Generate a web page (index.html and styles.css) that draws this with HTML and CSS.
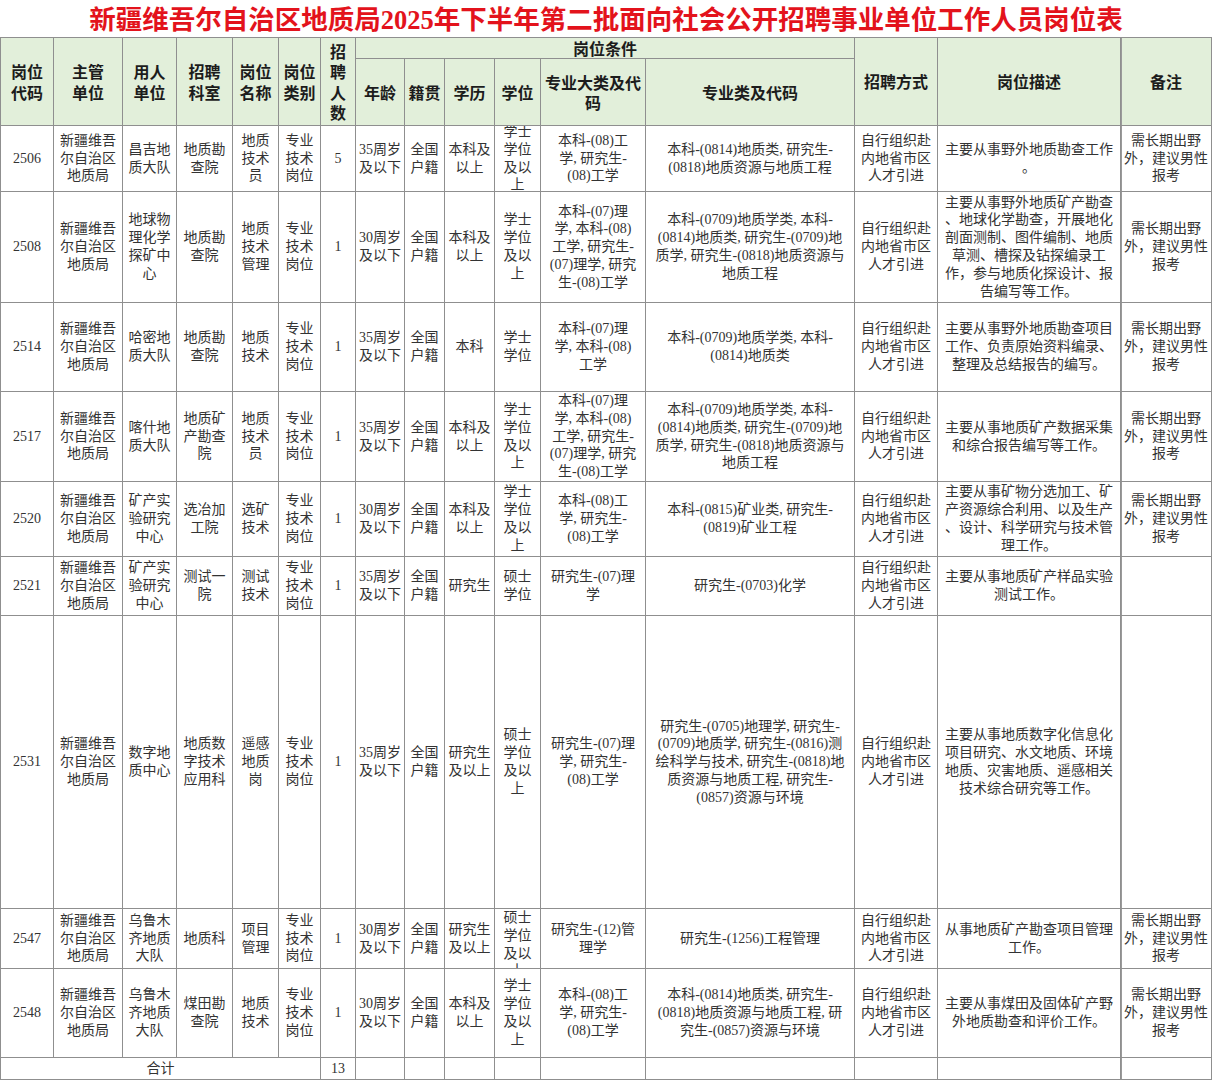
FILE: index.html
```html
<!DOCTYPE html>
<html lang="zh-CN">
<head>
<meta charset="utf-8">
<title>岗位表</title>
<link rel="stylesheet" href="styles.css">
</head>
<body>
<h1 class="title">新疆维吾尔自治区地质局2025年下半年第二批面向社会公开招聘事业单位工作人员岗位表</h1>
<div class="sheet">
  <div class="h r2"><span>岗位<br>代码</span></div>
  <div class="h r2"><span>主管<br>单位</span></div>
  <div class="h r2"><span>用人<br>单位</span></div>
  <div class="h r2"><span>招聘<br>科室</span></div>
  <div class="h r2"><span>岗位<br>名称</span></div>
  <div class="h r2"><span>岗位<br>类别</span></div>
  <div class="h r2"><span>招<br>聘<br>人<br>数</span></div>
  <div class="h w6 cond"><span>岗位条件</span></div>
  <div class="h r2"><span>招聘方式</span></div>
  <div class="h r2"><span>岗位描述</span></div>
  <div class="h r2 bz"><span>备注</span></div>
  <div class="h"><span>年龄</span></div>
  <div class="h"><span>籍贯</span></div>
  <div class="h"><span>学历</span></div>
  <div class="h"><span>学位</span></div>
  <div class="h"><span>专业大类及代<br>码</span></div>
  <div class="h"><span>专业类及代码</span></div>

  <div class="c"><span>2506</span></div>
  <div class="c"><span>新疆维吾<br>尔自治区<br>地质局</span></div>
  <div class="c"><span>昌吉地<br>质大队</span></div>
  <div class="c"><span>地质勘<br>查院</span></div>
  <div class="c"><span>地质<br>技术<br>员</span></div>
  <div class="c"><span>专业<br>技术<br>岗位</span></div>
  <div class="c"><span>5</span></div>
  <div class="c"><span>35周岁<br>及以下</span></div>
  <div class="c"><span>全国<br>户籍</span></div>
  <div class="c"><span>本科及<br>以上</span></div>
  <div class="c"><span>学士<br>学位<br>及以<br>上</span></div>
  <div class="c"><span>本科-(08)工<br>学, 研究生-<br>(08)工学</span></div>
  <div class="c"><span>本科-(0814)地质类, 研究生-<br>(0818)地质资源与地质工程</span></div>
  <div class="c"><span>自行组织赴<br>内地省市区<br>人才引进</span></div>
  <div class="c"><span>主要从事野外地质勘查工作<br>。</span></div>
  <div class="c bz"><span>需长期出野<br>外，建议男性<br>报考</span></div>

  <div class="c"><span>2508</span></div>
  <div class="c"><span>新疆维吾<br>尔自治区<br>地质局</span></div>
  <div class="c"><span>地球物<br>理化学<br>探矿中<br>心</span></div>
  <div class="c"><span>地质勘<br>查院</span></div>
  <div class="c"><span>地质<br>技术<br>管理</span></div>
  <div class="c"><span>专业<br>技术<br>岗位</span></div>
  <div class="c"><span>1</span></div>
  <div class="c"><span>30周岁<br>及以下</span></div>
  <div class="c"><span>全国<br>户籍</span></div>
  <div class="c"><span>本科及<br>以上</span></div>
  <div class="c"><span>学士<br>学位<br>及以<br>上</span></div>
  <div class="c"><span>本科-(07)理<br>学, 本科-(08)<br>工学, 研究生-<br>(07)理学, 研究<br>生-(08)工学</span></div>
  <div class="c"><span>本科-(0709)地质学类, 本科-<br>(0814)地质类, 研究生-(0709)地<br>质学, 研究生-(0818)地质资源与<br>地质工程</span></div>
  <div class="c"><span>自行组织赴<br>内地省市区<br>人才引进</span></div>
  <div class="c"><span>主要从事野外地质矿产勘查<br>、地球化学勘查，开展地化<br>剖面测制、图件编制、地质<br>草测、槽探及钻探编录工<br>作，参与地质化探设计、报<br>告编写等工作。</span></div>
  <div class="c bz"><span>需长期出野<br>外，建议男性<br>报考</span></div>

  <div class="c"><span>2514</span></div>
  <div class="c"><span>新疆维吾<br>尔自治区<br>地质局</span></div>
  <div class="c"><span>哈密地<br>质大队</span></div>
  <div class="c"><span>地质勘<br>查院</span></div>
  <div class="c"><span>地质<br>技术</span></div>
  <div class="c"><span>专业<br>技术<br>岗位</span></div>
  <div class="c"><span>1</span></div>
  <div class="c"><span>35周岁<br>及以下</span></div>
  <div class="c"><span>全国<br>户籍</span></div>
  <div class="c"><span>本科</span></div>
  <div class="c"><span>学士<br>学位</span></div>
  <div class="c"><span>本科-(07)理<br>学, 本科-(08)<br>工学</span></div>
  <div class="c"><span>本科-(0709)地质学类, 本科-<br>(0814)地质类</span></div>
  <div class="c"><span>自行组织赴<br>内地省市区<br>人才引进</span></div>
  <div class="c"><span>主要从事野外地质勘查项目<br>工作、负责原始资料编录、<br>整理及总结报告的编写。</span></div>
  <div class="c bz"><span>需长期出野<br>外，建议男性<br>报考</span></div>

  <div class="c"><span>2517</span></div>
  <div class="c"><span>新疆维吾<br>尔自治区<br>地质局</span></div>
  <div class="c"><span>喀什地<br>质大队</span></div>
  <div class="c"><span>地质矿<br>产勘查<br>院</span></div>
  <div class="c"><span>地质<br>技术<br>员</span></div>
  <div class="c"><span>专业<br>技术<br>岗位</span></div>
  <div class="c"><span>1</span></div>
  <div class="c"><span>35周岁<br>及以下</span></div>
  <div class="c"><span>全国<br>户籍</span></div>
  <div class="c"><span>本科及<br>以上</span></div>
  <div class="c"><span>学士<br>学位<br>及以<br>上</span></div>
  <div class="c"><span>本科-(07)理<br>学, 本科-(08)<br>工学, 研究生-<br>(07)理学, 研究<br>生-(08)工学</span></div>
  <div class="c"><span>本科-(0709)地质学类, 本科-<br>(0814)地质类, 研究生-(0709)地<br>质学, 研究生-(0818)地质资源与<br>地质工程</span></div>
  <div class="c"><span>自行组织赴<br>内地省市区<br>人才引进</span></div>
  <div class="c"><span>主要从事地质矿产数据采集<br>和综合报告编写等工作。</span></div>
  <div class="c bz"><span>需长期出野<br>外，建议男性<br>报考</span></div>

  <div class="c"><span>2520</span></div>
  <div class="c"><span>新疆维吾<br>尔自治区<br>地质局</span></div>
  <div class="c"><span>矿产实<br>验研究<br>中心</span></div>
  <div class="c"><span>选冶加<br>工院</span></div>
  <div class="c"><span>选矿<br>技术</span></div>
  <div class="c"><span>专业<br>技术<br>岗位</span></div>
  <div class="c"><span>1</span></div>
  <div class="c"><span>30周岁<br>及以下</span></div>
  <div class="c"><span>全国<br>户籍</span></div>
  <div class="c"><span>本科及<br>以上</span></div>
  <div class="c"><span>学士<br>学位<br>及以<br>上</span></div>
  <div class="c"><span>本科-(08)工<br>学, 研究生-<br>(08)工学</span></div>
  <div class="c"><span>本科-(0815)矿业类, 研究生-<br>(0819)矿业工程</span></div>
  <div class="c"><span>自行组织赴<br>内地省市区<br>人才引进</span></div>
  <div class="c"><span>主要从事矿物分选加工、矿<br>产资源综合利用、以及生产<br>、设计、科学研究与技术管<br>理工作。</span></div>
  <div class="c bz"><span>需长期出野<br>外，建议男性<br>报考</span></div>

  <div class="c"><span>2521</span></div>
  <div class="c"><span>新疆维吾<br>尔自治区<br>地质局</span></div>
  <div class="c"><span>矿产实<br>验研究<br>中心</span></div>
  <div class="c"><span>测试一<br>院</span></div>
  <div class="c"><span>测试<br>技术</span></div>
  <div class="c"><span>专业<br>技术<br>岗位</span></div>
  <div class="c"><span>1</span></div>
  <div class="c"><span>35周岁<br>及以下</span></div>
  <div class="c"><span>全国<br>户籍</span></div>
  <div class="c"><span>研究生</span></div>
  <div class="c"><span>硕士<br>学位</span></div>
  <div class="c"><span>研究生-(07)理<br>学</span></div>
  <div class="c"><span>研究生-(0703)化学</span></div>
  <div class="c"><span>自行组织赴<br>内地省市区<br>人才引进</span></div>
  <div class="c"><span>主要从事地质矿产样品实验<br>测试工作。</span></div>
  <div class="c bz"></div>

  <div class="c"><span>2531</span></div>
  <div class="c"><span>新疆维吾<br>尔自治区<br>地质局</span></div>
  <div class="c"><span>数字地<br>质中心</span></div>
  <div class="c"><span>地质数<br>字技术<br>应用科</span></div>
  <div class="c"><span>遥感<br>地质<br>岗</span></div>
  <div class="c"><span>专业<br>技术<br>岗位</span></div>
  <div class="c"><span>1</span></div>
  <div class="c"><span>35周岁<br>及以下</span></div>
  <div class="c"><span>全国<br>户籍</span></div>
  <div class="c"><span>研究生<br>及以上</span></div>
  <div class="c"><span>硕士<br>学位<br>及以<br>上</span></div>
  <div class="c"><span>研究生-(07)理<br>学, 研究生-<br>(08)工学</span></div>
  <div class="c"><span>研究生-(0705)地理学, 研究生-<br>(0709)地质学, 研究生-(0816)测<br>绘科学与技术, 研究生-(0818)地<br>质资源与地质工程, 研究生-<br>(0857)资源与环境</span></div>
  <div class="c"><span>自行组织赴<br>内地省市区<br>人才引进</span></div>
  <div class="c"><span>主要从事地质数字化信息化<br>项目研究、水文地质、环境<br>地质、灾害地质、遥感相关<br>技术综合研究等工作。</span></div>
  <div class="c bz"></div>

  <div class="c"><span>2547</span></div>
  <div class="c"><span>新疆维吾<br>尔自治区<br>地质局</span></div>
  <div class="c"><span>乌鲁木<br>齐地质<br>大队</span></div>
  <div class="c"><span>地质科</span></div>
  <div class="c"><span>项目<br>管理</span></div>
  <div class="c"><span>专业<br>技术<br>岗位</span></div>
  <div class="c"><span>1</span></div>
  <div class="c"><span>30周岁<br>及以下</span></div>
  <div class="c"><span>全国<br>户籍</span></div>
  <div class="c"><span>研究生<br>及以上</span></div>
  <div class="c top"><span>硕士<br>学位<br>及以<br>上</span></div>
  <div class="c"><span>研究生-(12)管<br>理学</span></div>
  <div class="c"><span>研究生-(1256)工程管理</span></div>
  <div class="c"><span>自行组织赴<br>内地省市区<br>人才引进</span></div>
  <div class="c"><span>从事地质矿产勘查项目管理<br>工作。</span></div>
  <div class="c bz"><span>需长期出野<br>外，建议男性<br>报考</span></div>

  <div class="c"><span>2548</span></div>
  <div class="c"><span>新疆维吾<br>尔自治区<br>地质局</span></div>
  <div class="c"><span>乌鲁木<br>齐地质<br>大队</span></div>
  <div class="c"><span>煤田勘<br>查院</span></div>
  <div class="c"><span>地质<br>技术</span></div>
  <div class="c"><span>专业<br>技术<br>岗位</span></div>
  <div class="c"><span>1</span></div>
  <div class="c"><span>30周岁<br>及以下</span></div>
  <div class="c"><span>全国<br>户籍</span></div>
  <div class="c"><span>本科及<br>以上</span></div>
  <div class="c"><span>学士<br>学位<br>及以<br>上</span></div>
  <div class="c"><span>本科-(08)工<br>学, 研究生-<br>(08)工学</span></div>
  <div class="c"><span>本科-(0814)地质类, 研究生-<br>(0818)地质资源与地质工程, 研<br>究生-(0857)资源与环境</span></div>
  <div class="c"><span>自行组织赴<br>内地省市区<br>人才引进</span></div>
  <div class="c"><span>主要从事煤田及固体矿产野<br>外地质勘查和评价工作。</span></div>
  <div class="c bz"><span>需长期出野<br>外，建议男性<br>报考</span></div>

  <div class="c w6"><span>合计</span></div>
  <div class="c"><span>13</span></div>
  <div class="c"></div>
  <div class="c"></div>
  <div class="c"></div>
  <div class="c"></div>
  <div class="c"></div>
  <div class="c"></div>
  <div class="c"></div>
  <div class="c"></div>
  <div class="c bz"></div>
</div>
</body>
</html>
```

FILE: styles.css
```css
* {
  box-sizing: border-box;
}

html,
body {
  margin: 0;
  padding: 0;
  background: #ffffff;
}

body {
  width: 1212px;
}

.title {
  margin: 0;
  height: 37px;
  padding-top: 3px;
  display: flex;
  align-items: center;
  justify-content: center;
  font: 700 26.5px/1 "Liberation Serif", "Noto Sans CJK SC", serif;
  color: #e3131c;
  white-space: nowrap;
}

.sheet {
  width: 1212px;
  display: grid;
  grid-template-columns: 52px 68px 53px 55px 45px 41px 34px 48px 39px 49px 45px 104px 208px 82px 182px 90px;
  grid-template-rows: 20px 66px 65px 110px 88px 89px 74px 58px 292px 59px 88px 21px;
  gap: 1px;
  padding: 1px;
  background: #8f8f8f;
}

.sheet > div {
  background: #ffffff;
  display: flex;
  align-items: center;
  justify-content: center;
  text-align: center;
  overflow: hidden;
  white-space: nowrap;
}

.sheet > .h {
  background: #e2efda;
  font: 700 16px/20.5px "Noto Sans CJK SC", sans-serif;
  color: #1c1c1c;
}

.sheet > .cond {
  line-height: 19px;
}

.sheet > .c {
  font: 400 14px/17.8px "Liberation Serif", "Noto Sans CJK SC", serif;
  color: #333333;
}

.sheet > .top {
  align-items: flex-start;
}

.sheet > .bz {
  box-shadow: inset 1px 0 0 #9a9a9a;
}

.r2 {
  grid-row: span 2;
}

.w6 {
  grid-column: span 6;
}
```
